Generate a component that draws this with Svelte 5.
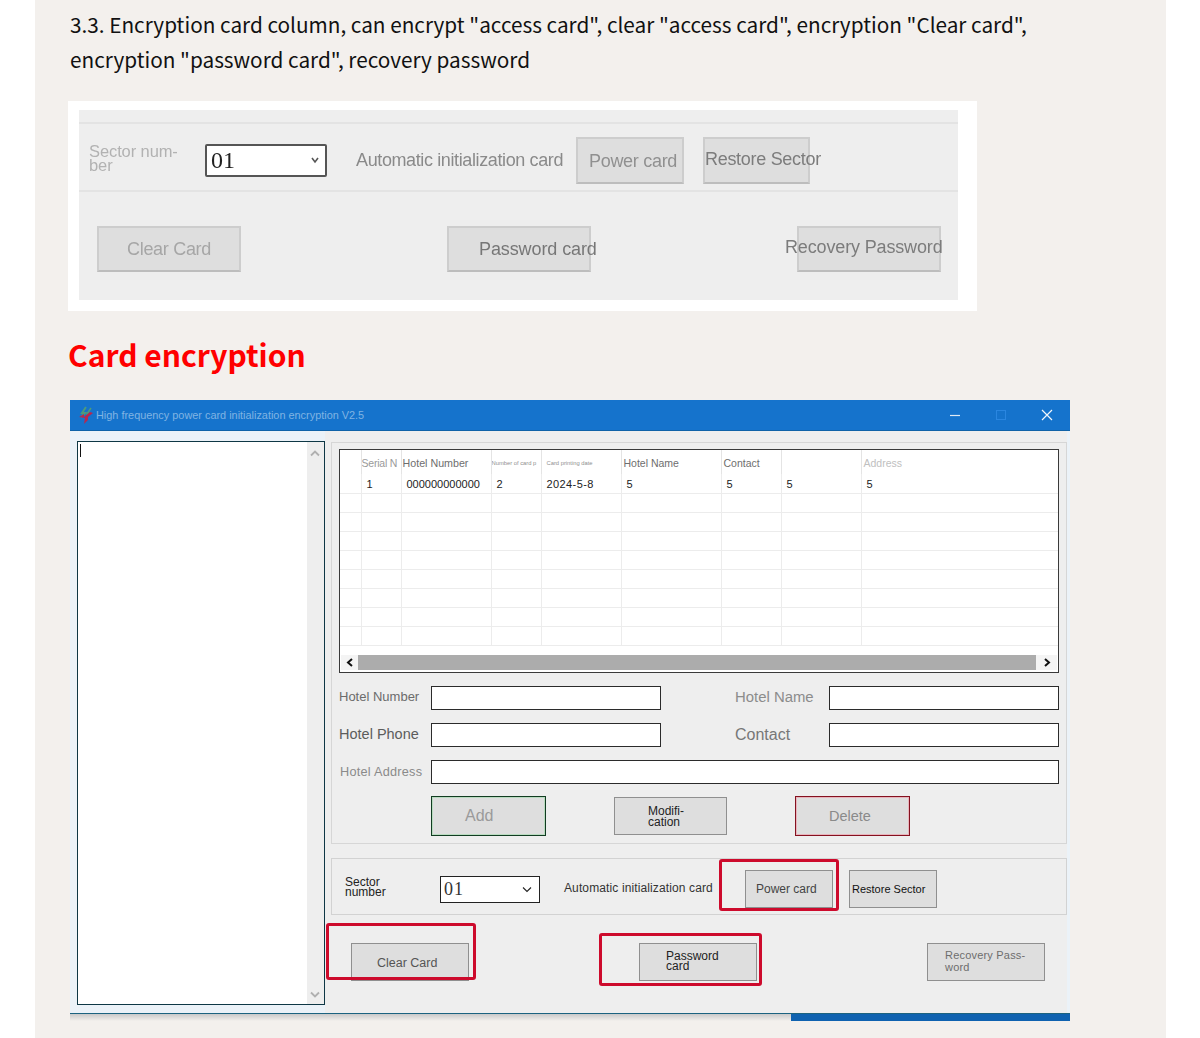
<script>
  const columns = [21, 40, 90, 50, 80, 100, 60, 80, 197];
  const heads = [
    { text: '' },
    { text: 'Serial N', cls: 'h-soft' },
    { text: 'Hotel Number', cls: 'h-number' },
    { text: 'Number of card p', cls: 'h-tiny' },
    { text: 'Card printing date', cls: 'h-tiny h-date' },
    { text: 'Hotel Name' },
    { text: 'Contact' },
    { text: '' },
    { text: 'Address', cls: 'h-faint' }
  ];
  const firstRow = ['', '1', '000000000000', '2', '2024-5-8', '5', '5', '5', '5'];
  const emptyRows = Array(8).fill(0);
</script>

<main class="article">
  <p class="intro">3.3. Encryption card column, can encrypt "access card", clear "access card", encryption "Clear card",<br />encryption "password card", recovery password</p>

  <figure class="shot">
    <div class="shot-inner">
      <div class="shot-row">
        <span class="shot-sector">Sector num-<br />ber</span>
        <div class="shot-select">
          <span>01</span>
          <svg width="12" height="8" viewBox="0 0 12 8"><path d="M3 2l3 4 3-4" fill="none" stroke="#555" stroke-width="1.6" /></svg>
        </div>
        <span class="shot-auto">Automatic initialization card</span>
        <div class="shot-btn power">Power card</div>
        <div class="shot-btn restore">Restore Sector</div>
      </div>
      <div class="shot-actions">
        <div class="shot-btn big clear">Clear Card</div>
        <div class="shot-btn big pass">Password card</div>
        <div class="shot-btn big recover">Recovery Password</div>
      </div>
    </div>
  </figure>

  <h2 class="heading">Card encryption</h2>

  <section class="window">
    <header class="titlebar">
      <svg class="logo" width="16" height="18" viewBox="0 0 16 18">
        <path d="M8 1L4 7h3L3 11" fill="none" stroke="#4d9a7c" stroke-width="2" />
        <path d="M13 2L9 8h3" fill="none" stroke="#4d9a7c" stroke-width="1.6" />
        <path d="M1 11l5-3v3l6-5 3 1-5 4v3l-4 4 1-6z" fill="#b8274f" />
      </svg>
      <span class="title">High frequency power card initialization encryption V2.5</span>
      <div class="controls">
        <svg width="12" height="12" viewBox="0 0 12 12"><path d="M1 6.5h10" stroke="#dfeaf5" stroke-width="1.2" /></svg>
        <svg width="12" height="12" viewBox="0 0 12 12"><rect x="1.5" y="1.5" width="9" height="9" fill="none" stroke="#2a86e0" /></svg>
        <svg width="12" height="12" viewBox="0 0 12 12"><path d="M1 1l10 10M11 1L1 11" stroke="#f2f6fb" stroke-width="1.2" /></svg>
      </div>
    </header>

    <div class="client">
      <div class="log">
        <i class="caret"></i>
        <div class="log-scroll">
          <svg width="10" height="7" viewBox="0 0 10 7"><path d="M1 5.5l4-4 4 4" fill="none" stroke="#b0b0b0" stroke-width="1.8" /></svg>
          <svg width="10" height="7" viewBox="0 0 10 7"><path d="M1 1.5l4 4 4-4" fill="none" stroke="#b0b0b0" stroke-width="1.8" /></svg>
        </div>
      </div>

      <div class="main-col">
        <div class="panel">
          <div class="table-box">
            <table>
              <colgroup>
                {#each columns as w}<col style="width:{w}px" />{/each}
              </colgroup>
              <thead>
                <tr>
                  {#each heads as h}<th class={h.cls}>{h.text}</th>{/each}
                </tr>
              </thead>
              <tbody>
                <tr class="data">
                  {#each firstRow as c}<td>{c}</td>{/each}
                </tr>
                {#each emptyRows as _}
                  <tr>
                    {#each columns as _c}<td></td>{/each}
                  </tr>
                {/each}
              </tbody>
            </table>
            <div class="hscroll">
              <span class="arrow"><svg width="8" height="9" viewBox="0 0 8 9"><path d="M6 1L2 4.5 6 8" fill="none" stroke="#111" stroke-width="2" /></svg></span>
              <span class="thumb"></span>
              <span class="arrow"><svg width="8" height="9" viewBox="0 0 8 9"><path d="M2 1l4 3.5L2 8" fill="none" stroke="#111" stroke-width="2" /></svg></span>
            </div>
          </div>

          <div class="form">
            <span class="l-number">Hotel Number</span>
            <div class="input"></div>
            <span class="l-name">Hotel Name</span>
            <div class="input"></div>
            <span class="l-phone">Hotel Phone</span>
            <div class="input"></div>
            <span class="l-contact">Contact</span>
            <div class="input"></div>
            <span class="l-address">Hotel Address</span>
            <div class="input wide"></div>
          </div>

          <div class="form-actions">
            <div class="btn add">Add</div>
            <div class="btn modify">Modifi-<br />cation</div>
            <div class="btn delete">Delete</div>
          </div>
        </div>

        <div class="sector">
          <span class="sector-label">Sector<br />number</span>
          <div class="select">
            <span>01</span>
            <svg width="10" height="7" viewBox="0 0 10 7"><path d="M1 1.5l4 4 4-4" fill="none" stroke="#222" stroke-width="1.1" /></svg>
          </div>
          <span class="auto">Automatic initialization card</span>
          <div class="btn s-power">Power card</div>
          <div class="btn s-restore">Restore Sector</div>
        </div>

        <div class="bottom-actions">
          <div class="btn b-clear">Clear Card</div>
          <div class="btn b-pass">Password<br />card</div>
          <div class="btn b-recover">Recovery Pass-<br />word</div>
        </div>
      </div>

      <div class="mark mark-power"></div>
      <div class="mark mark-clear"></div>
      <div class="mark mark-pass"></div>
    </div>
  </section>
  <div class="window-foot">
    <div class="foot-shadow"></div>
    <div class="foot-blue"></div>
  </div>
</main>

<style>
  :global(body) {
    margin: 0;
    background: #fff;
  }
  .article {
    margin-left: 35px;
    width: 1131px;
    height: 1038px;
    box-sizing: border-box;
    padding: 7px 0 0 33px;
    background: #f3f0ed;
    overflow: hidden;
    font-family: "Liberation Sans", Arial, sans-serif;
  }
  .intro {
    margin: 0 0 24px 2px;
    font: 20.75px/35px "Noto Sans CJK SC", "Noto Sans", sans-serif;
    color: #111;
    white-space: nowrap;
  }

  /* first picture */
  .shot {
    margin: 0;
    width: 909px;
    height: 210px;
    box-sizing: border-box;
    padding: 9px 19px 11px 11px;
    background: #fff;
  }
  .shot-inner {
    height: 190px;
    box-sizing: border-box;
    padding-top: 12px;
    background: #eeeeee;
    filter: blur(0.4px);
  }
  .shot-row {
    display: flex;
    align-items: center;
    height: 70px;
    box-sizing: border-box;
    padding: 6px 0 0 10px;
    border-top: 2px solid #e3e3e3;
    border-bottom: 2px solid #e3e3e3;
  }
  .shot-sector {
    width: 116px;
    margin-top: -4px;
    font-size: 16.5px;
    line-height: 14px;
    letter-spacing: -0.1px;
    color: #b2b2b2;
  }
  .shot-select {
    display: flex;
    align-items: center;
    justify-content: space-between;
    width: 122px;
    height: 33px;
    box-sizing: border-box;
    padding: 0 4px;
    border: 2px solid #555;
    border-radius: 2px;
    background: #fff;
    font: 24px "Liberation Serif", serif;
    color: #222;
  }
  .shot-auto {
    margin-left: 29px;
    width: 220px;
    font-size: 18px;
    letter-spacing: -0.38px;
    color: #8a8a8a;
    white-space: nowrap;
  }
  .shot-btn {
    box-sizing: border-box;
    border: 2px solid #cdcdcd;
    border-bottom-color: #bdbdbd;
    background: #dedede;
    font-size: 18px;
    letter-spacing: -0.3px;
    white-space: nowrap;
    color: #7c7c7c;
  }
  .shot-btn.power {
    width: 108px;
    height: 47px;
    padding: 12px 0 0 11px;
    color: #909090;
  }
  .shot-btn.restore {
    width: 107px;
    height: 47px;
    margin-left: 19px;
    padding: 10px 0 0;
  }
  .shot-actions {
    display: flex;
    gap: 206px;
    padding: 34px 0 0 18px;
  }
  .shot-btn.big {
    width: 144px;
    height: 46px;
    line-height: 42px;
  }
  .shot-btn.clear {
    padding-left: 28px;
    color: #a6a6a6;
  }
  .shot-btn.pass {
    padding-left: 30px;
    letter-spacing: -0.1px;
    color: #777;
  }
  .shot-btn.recover {
    text-indent: -14px;
    letter-spacing: -0.15px;
    line-height: 38px;
  }

  .heading {
    margin: 18px 0 21px;
    font: 700 30px/50px "Noto Sans CJK SC", "Noto Sans", sans-serif;
    color: #f00;
  }

  /* app window */
  .window {
    width: 1000px;
    margin-left: 2px;
    height: 614px;
    box-sizing: border-box;
    border-bottom: 1px solid #1c6380;
    background: #ebf2f8;
  }
  .titlebar {
    display: flex;
    align-items: center;
    height: 31px;
    box-sizing: border-box;
    padding-left: 8px;
    background: #1573cc;
    border-bottom: 1px solid #0f62a8;
  }
  .logo {
    margin-right: 2px;
  }
  .title {
    font-size: 10.9px;
    color: #80b3e3;
  }
  .controls {
    display: flex;
    gap: 34px;
    margin-left: auto;
    padding-right: 17px;
  }
  .client {
    position: relative;
    display: flex;
    height: 582px;
  }
  .log {
    position: relative;
    width: 248px;
    height: 564px;
    box-sizing: border-box;
    margin: 10px 0 0 7px;
    border: 1px solid #0e3745;
    background: #fff;
  }
  .caret {
    position: absolute;
    left: 2px;
    top: 2px;
    width: 1px;
    height: 13px;
    background: #111;
  }
  .log-scroll {
    position: absolute;
    top: 0;
    right: 0;
    bottom: 0;
    display: flex;
    flex-direction: column;
    justify-content: space-between;
    align-items: center;
    width: 17px;
    box-sizing: border-box;
    padding: 8px 2px 6px 0;
    background: #eeeeee;
  }
  .main-col {
    width: 742px;
    padding-left: 6px;
    box-sizing: border-box;
    background: #eeeeee;
  }
  .panel {
    height: 402px;
    box-sizing: border-box;
    margin-top: 11px;
    padding: 6px 7px 0;
    border: 1px solid #d6d6d6;
  }
  .table-box {
    position: relative;
    width: 720px;
    height: 224px;
    box-sizing: border-box;
    border: 1px solid #3a3a3a;
    background: #fff;
    overflow: hidden;
  }
  table {
    table-layout: fixed;
    width: 718px;
    border-collapse: collapse;
  }
  th {
    height: 24px;
    padding: 2px 0 0 2px;
    box-sizing: border-box;
    border-right: 1px solid #e4e4e4;
    font-size: 10.5px;
    font-weight: 400;
    text-align: left;
    color: #6e6e6e;
    white-space: nowrap;
    overflow: hidden;
  }
  th:last-child {
    border-right: 0;
  }
  th.h-soft {
    padding-left: 0;
    letter-spacing: -0.2px;
    color: #9a9a9a;
  }
  th.h-number {
    padding-left: 1px;
    font-size: 10.7px;
  }
  th.h-tiny {
    padding-left: 0;
    font-size: 5.8px;
    color: #8f8f8f;
  }
  th.h-date {
    padding-left: 5px;
  }
  th.h-faint {
    color: #c0c0c0;
  }
  td {
    height: 19px;
    padding: 0 0 0 5px;
    box-sizing: border-box;
    border-right: 1px solid #ececec;
    border-bottom: 1px solid #ececec;
    font-size: 11px;
    color: #222;
    white-space: nowrap;
    overflow: hidden;
  }
  td:last-child {
    border-right: 0;
  }
  .data td {
    padding-top: 2px;
  }
  .data td:nth-child(5) {
    letter-spacing: 0.4px;
  }
  .hscroll {
    position: absolute;
    left: 1px;
    right: 1px;
    bottom: 2px;
    display: flex;
    height: 15px;
    background: #f4f4f4;
  }
  .arrow {
    display: flex;
    align-items: center;
    justify-content: center;
    flex: none;
    width: 17px;
  }
  .hscroll .arrow:last-child {
    width: 21px;
  }
  .thumb {
    flex: 1;
    background: #acacac;
  }

  .form {
    display: grid;
    grid-template-columns: 92px 230px 168px 230px;
    grid-auto-rows: 24px;
    row-gap: 13px;
    margin-top: 13px;
  }
  .form span {
    align-self: center;
    line-height: 20px;
    white-space: nowrap;
  }
  .input {
    box-sizing: border-box;
    border: 1px solid #2b2b2b;
    background: #fff;
  }
  .input.wide {
    grid-column: 2 / 5;
  }
  .l-number {
    margin-bottom: 3px;
    font-size: 13px;
    color: #6b6b6b;
  }
  .l-name {
    margin: 0 0 2px 74px;
    font-size: 14.9px;
    color: #8c8c8c;
  }
  .l-phone {
    margin-bottom: 2px;
    font-size: 14.5px;
    color: #5c5c5c;
  }
  .l-contact {
    margin: 0 0 1px 74px;
    font-size: 16px;
    color: #777;
  }
  .l-address {
    margin-left: 1px;
    font-size: 12.7px;
    letter-spacing: 0.25px;
    color: #8a8a8a;
  }
  .form-actions {
    display: flex;
    align-items: center;
    gap: 68px;
    height: 40px;
    margin: 12px 0 0 92px;
  }

  .btn {
    box-sizing: border-box;
    border: 1px solid #8f8f8f;
    background: #dedede;
    color: #444;
    font-size: 12px;
    white-space: nowrap;
  }
  .add {
    width: 115px;
    height: 40px;
    padding-left: 33px;
    border: 1px solid #123c22;
    box-shadow: inset 0 0 0 1px #b9dcc0;
    font-size: 16px;
    line-height: 38px;
    color: #9a9a9a;
  }
  .modify {
    width: 113px;
    height: 38px;
    padding: 8px 0 0 33px;
    line-height: 11px;
    color: #222;
  }
  .delete {
    width: 115px;
    height: 40px;
    padding-left: 33px;
    border: 1px solid #84111f;
    box-shadow: inset 0 0 0 1px #e8b4bc;
    font-size: 14.5px;
    line-height: 38px;
    color: #8a8a8a;
  }

  .sector {
    display: flex;
    align-items: center;
    height: 57px;
    box-sizing: border-box;
    margin-top: 14px;
    padding: 4px 0 0 13px;
    border: 1px solid #d2d2d2;
  }
  .sector-label {
    width: 95px;
    margin-top: -3px;
    font-size: 12px;
    line-height: 10px;
    color: #222;
  }
  .select {
    display: flex;
    align-items: center;
    justify-content: space-between;
    width: 100px;
    height: 27px;
    box-sizing: border-box;
    margin-top: 1px;
    padding: 0 7px 0 3px;
    border: 1px solid #222;
    background: #fff;
    font: 18px "Liberation Serif", serif;
    letter-spacing: 1px;
    color: #333;
  }
  .auto {
    width: 181px;
    margin: -1px 0 0 24px;
    font-size: 12px;
    letter-spacing: 0.12px;
    color: #333;
  }
  .s-power {
    width: 88px;
    height: 38px;
    padding-left: 10px;
    line-height: 36px;
  }
  .s-restore {
    width: 88px;
    height: 38px;
    margin-left: 16px;
    padding-left: 2px;
    font-size: 11px;
    line-height: 37px;
    color: #111;
  }
  .bottom-actions {
    display: flex;
    gap: 170px;
    padding: 28px 0 0 20px;
  }
  .bottom-actions .btn {
    width: 118px;
    height: 38px;
  }
  .b-clear {
    padding-left: 25px;
    font-size: 12.5px;
    line-height: 38px;
    color: #555;
  }
  .b-pass {
    padding: 7px 0 0 26px;
    line-height: 10px;
    color: #222;
  }
  .b-recover {
    padding: 5px 0 0 17px;
    font-size: 11px;
    line-height: 12px;
    letter-spacing: 0.2px;
    color: #6d6d6d;
  }

  /* hand-drawn red frames on top of the screenshot */
  .mark {
    position: absolute;
    box-sizing: border-box;
    border: 3px solid #cd0a2c;
    border-radius: 3px;
  }
  .mark-power {
    left: 649px;
    top: 428px;
    width: 120px;
    height: 52px;
  }
  .mark-clear {
    left: 256px;
    top: 492px;
    width: 150px;
    height: 57px;
  }
  .mark-pass {
    left: 529px;
    top: 502px;
    width: 163px;
    height: 53px;
  }

  .window-foot {
    display: flex;
    width: 1000px;
    height: 7px;
    margin-left: 2px;
  }
  .foot-shadow {
    flex: 1;
    background: linear-gradient(#c9c9c9, #f3f0ed);
  }
  .foot-blue {
    width: 279px;
    background: #0f62b0;
  }
</style>
